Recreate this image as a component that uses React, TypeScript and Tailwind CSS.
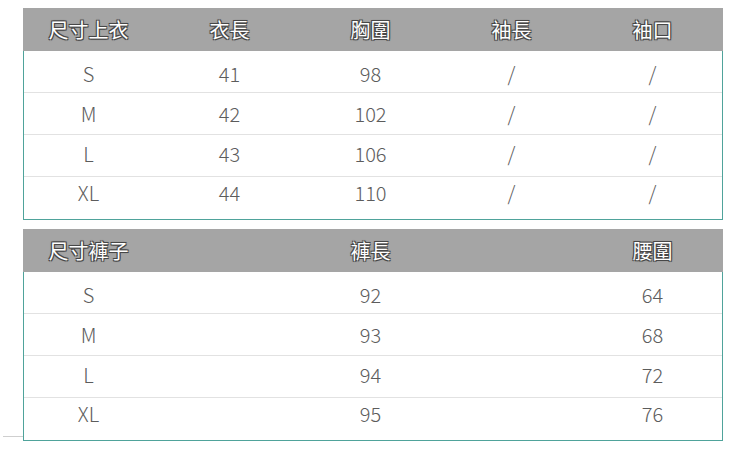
import React from "react";

const FONT = { fontFamily: '"Noto Sans CJK TC", "Noto Sans", sans-serif' };

const HEAD =
  "flex items-center justify-center text-[20px] font-normal text-white [text-shadow:-1px_-1px_0_#474747,1px_-1px_0_#474747,-1px_1px_0_#474747,1px_1px_0_#474747,0_0_2px_#3a3a3a]";
const CELL = "flex items-center justify-center text-[20px] font-light text-[#5c5c5c]";
const SHIFT = ["relative top-[2px]", "relative top-0", "relative -top-[2px]", "relative -top-[5px]"];

function Table({ head, rows }: { head: string[]; rows: string[][] }) {
  return (
    <div className="w-[700px]">
      <div className="h-[43px] bg-[#a5a5a5]">
        <div className="-ml-[5px] grid h-full w-[705px] grid-cols-[repeat(5,141px)]">
          {head.map((h, i) => (
            <div key={i} className={HEAD}>
              {h}
            </div>
          ))}
        </div>
      </div>
      <div className="border-x border-b border-[#4fa39b]">
        {rows.map((r, ri) => (
          <div
            key={ri}
            className={
              (ri > 0 ? "border-t border-[#e2e2e2] " : "") +
              (ri === rows.length - 1 ? "h-[43px]" : ri === 0 ? "h-[41px]" : "h-[42px]")
            }
          >
            <div className="-ml-[6px] grid h-full w-[705px] grid-cols-[repeat(5,141px)]">
              {r.map((c, ci) => (
                <div key={ci} className={CELL}>
                  <span className={SHIFT[ri]}>{c}</span>
                </div>
              ))}
            </div>
          </div>
        ))}
      </div>
    </div>
  );
}

export default function App() {
  return (
    <div className="relative h-[451px] w-[750px] bg-white" style={FONT}>
      <div className="flex flex-col gap-[9px] pl-[23px] pt-[8px]">
        <Table
          head={["尺寸上衣", "衣長", "胸圍", "袖長", "袖口"]}
          rows={[
            ["S", "41", "98", "/", "/"],
            ["M", "42", "102", "/", "/"],
            ["L", "43", "106", "/", "/"],
            ["XL", "44", "110", "/", "/"],
          ]}
        />
        <Table
          head={["尺寸褲子", "", "褲長", "", "腰圍"]}
          rows={[
            ["S", "", "92", "", "64"],
            ["M", "", "93", "", "68"],
            ["L", "", "94", "", "72"],
            ["XL", "", "95", "", "76"],
          ]}
        />
      </div>
      <div className="absolute left-[3px] top-[436px] h-px w-[20px] bg-[#cfcfcf]" />
    </div>
  );
}
